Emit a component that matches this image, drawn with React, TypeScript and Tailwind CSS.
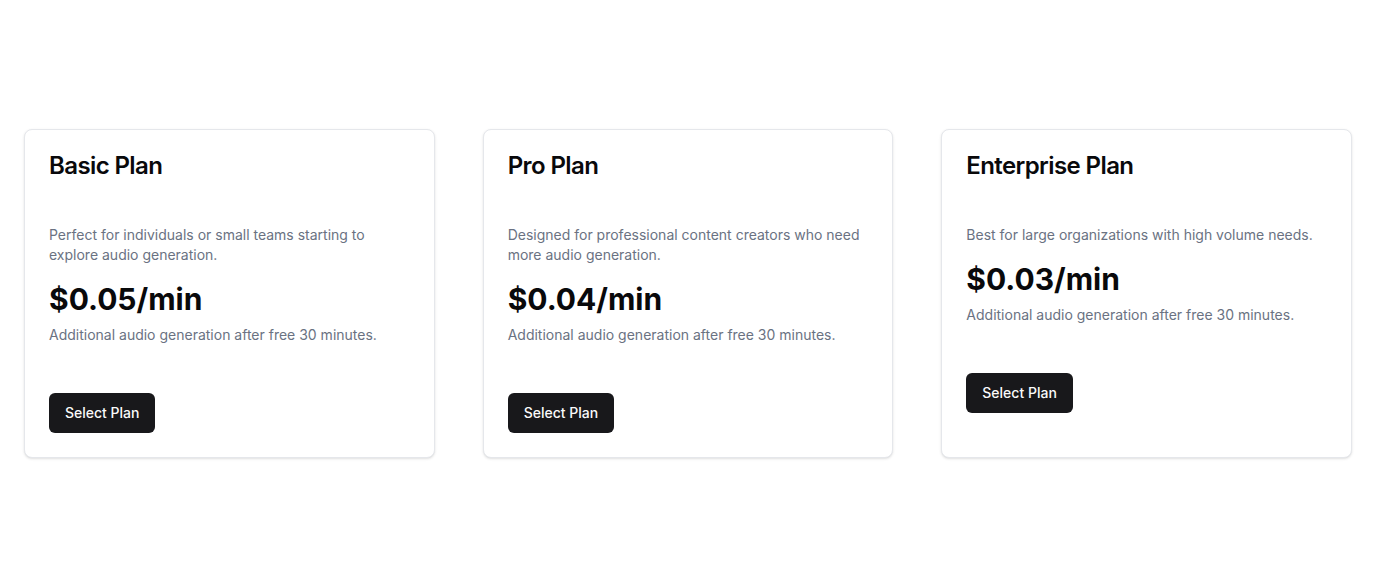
import React from "react";

const plans = [
  {
    name: "Basic Plan",
    description:
      "Perfect for individuals or small teams starting to explore audio generation.",
    price: "$0.05/min",
  },
  {
    name: "Pro Plan",
    description:
      "Designed for professional content creators who need more audio generation.",
    price: "$0.04/min",
  },
  {
    name: "Enterprise Plan",
    description: "Best for large organizations with high volume needs.",
    price: "$0.03/min",
  },
];

const PlanCard = ({
  name,
  description,
  price,
}: {
  name: string;
  description: string;
  price: string;
}) => {
  return (
    <div className="rounded-lg border border-gray-200 bg-white shadow-sm">
      <div className="p-6 pb-0">
        <h3 className="text-2xl font-semibold leading-none tracking-tight text-[#09090b]">
          {name}
        </h3>
      </div>
      <div className="p-6 pt-[47px]">
        <p className="text-sm leading-5 text-gray-500">{description}</p>
        <p className="mt-4 text-3xl leading-9 font-bold text-[#09090b]">
          {price}
        </p>
        <p className="mt-2 text-sm leading-5 text-gray-500">
          Additional audio generation after free 30 minutes.
        </p>
      </div>
      <div className="flex items-center p-6 pt-0">
        <button className="mt-6 h-10 rounded-md bg-[#18181b] px-4 text-sm font-medium text-[#fafafa]">
          Select Plan
        </button>
      </div>
    </div>
  );
};

const App = () => {
  return (
    <div
      className="flex min-h-screen items-center bg-white px-6"
      style={{ fontFamily: "Inter, 'Noto Sans', sans-serif" }}
    >
      <div className="grid w-full grid-cols-3 gap-12">
        {plans.map((p) => (
          <PlanCard key={p.name} {...p} />
        ))}
      </div>
    </div>
  );
};

export default App;
